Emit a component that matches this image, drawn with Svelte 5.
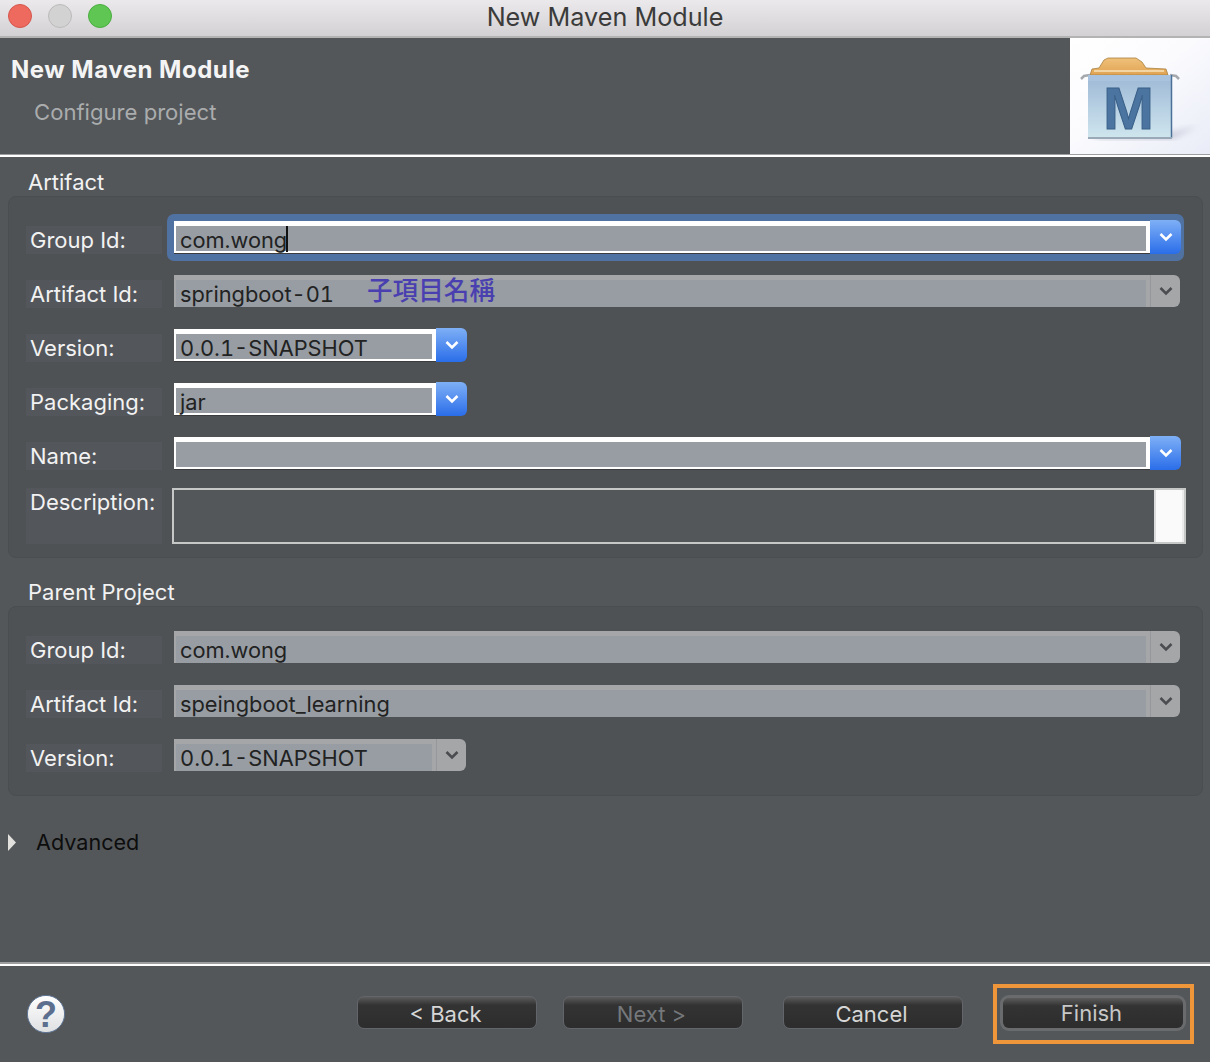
<script>
  const artifact = [
    { label: 'Group Id:', value: 'com.wong', focus: true },
    { label: 'Artifact Id:', value: 'springboot-01', disabled: true, note: '子項目名稱' },
    { label: 'Version:', value: '0.0.1-SNAPSHOT', short: true },
    { label: 'Packaging:', value: 'jar', short: true },
    { label: 'Name:', value: '' }
  ];
  const parent = [
    { label: 'Group Id:', value: 'com.wong', disabled: true },
    { label: 'Artifact Id:', value: 'speingboot_learning', disabled: true },
    { label: 'Version:', value: '0.0.1-SNAPSHOT', disabled: true, short: true }
  ];
</script>

{#snippet combo(row)}
  <div class="lab">{row.label}</div>
  <div class="slot" class:ring={row.focus}>
    <div class="combo" class:dis={row.disabled} class:short={row.short}>
      <div class="frame">
        <div class="inner">
          <span class="val">{row.value}</span>
          {#if row.focus}<span class="caret"></span>{/if}
          {#if row.note}<span class="note">{row.note}</span>{/if}
        </div>
      </div>
      <div class="arrow">
        <svg width="16" height="10" viewBox="0 0 16 10"><path d="M2.5 2 L8 7.5 L13.5 2" fill="none" stroke="currentColor" stroke-width="2.6"/></svg>
      </div>
    </div>
  </div>
{/snippet}

<div class="win">
  <header class="titlebar">
    <div class="lights">
      <span class="dot red"></span><span class="dot grey"></span><span class="dot green"></span>
    </div>
    <div class="wintitle">New Maven Module</div>
  </header>

  <section class="banner">
    <div class="bantext">
      <div class="h1">New Maven Module</div>
      <div class="h2">Configure project</div>
    </div>
    <div class="logo">
      <svg width="140" height="116" viewBox="0 0 140 116">
        <defs>
          <linearGradient id="bg" x1="0" y1="0" x2="1" y2="1"><stop offset="0" stop-color="#ffffff"/><stop offset="0.45" stop-color="#fbfbfe"/><stop offset="1" stop-color="#e9ecf7"/></linearGradient>
          <linearGradient id="box" x1="0" y1="0" x2="0" y2="1"><stop offset="0" stop-color="#9db8d6"/><stop offset="1" stop-color="#cfe6ee"/></linearGradient>
          <linearGradient id="lid" x1="0" y1="0" x2="0" y2="1"><stop offset="0" stop-color="#efc07a"/><stop offset="1" stop-color="#e0a452"/></linearGradient>
          <filter id="blur"><feGaussianBlur stdDeviation="3"/></filter>
        </defs>
        <rect width="140" height="116" fill="url(#bg)"/>
        <path d="M22 101 L102 101 L128 88 L104 94 L30 97 Z" fill="#a6a8bc" opacity="0.55" filter="url(#blur)"/>
        <path d="M20 37 L22 31 L29 30 L34 22 L38 20 L66 20 L72 24 L76 30 L96 31 L98 37 Z" fill="url(#lid)" stroke="#a8803f" stroke-width="0.8"/>
        <path d="M24 33 L94 33" stroke="#f8e3bd" stroke-width="1.5"/>
        <path d="M11 41 L14 38 L20 37 M109 41 L106 38 L100 37" stroke="#a5a9ad" stroke-width="2.5" fill="none"/>
        <rect x="18" y="37" width="84" height="63" fill="url(#box)"/>
        <rect x="18" y="37" width="84" height="6" fill="#a9c3df"/>
        <path d="M101.5 37 V100" stroke="#4b7098" stroke-width="1.5"/>
        <path d="M18 100 H102" stroke="#9aa9b8" stroke-width="2"/>
        <text x="33" y="91" textLength="51" lengthAdjust="spacingAndGlyphs" class="mark">M</text>
      </svg>
    </div>
  </section>
  <div class="rule top"></div>

  <main class="body">
    <div class="gtitle">Artifact</div>
    <div class="gbox first">
      {#each artifact as row}
        {@render combo(row)}
      {/each}
      <div class="lab tall">Description:</div>
      <div class="desc"><div class="scroll"></div></div>
    </div>

    <div class="gtitle second">Parent Project</div>
    <div class="gbox">
      {#each parent as row}
        {@render combo(row)}
      {/each}
    </div>

    <div class="adv">
      <svg width="8" height="17" viewBox="0 0 8 17"><path d="M0 0 L8 8.5 L0 17 Z" fill="#e2e1dd"/></svg>
      <span>Advanced</span>
    </div>
  </main>

  <div class="rule bottom"></div>
  <footer class="foot">
    <svg class="help" width="40" height="40" viewBox="0 0 40 40">
      <defs><linearGradient id="hg" x1="0" y1="0" x2="0" y2="1"><stop offset="0" stop-color="#ffffff"/><stop offset="1" stop-color="#dfe0e2"/></linearGradient></defs>
      <circle cx="20" cy="20" r="18.6" fill="url(#hg)" stroke="#5d7394" stroke-width="1"/>
      <text x="20" y="33" text-anchor="middle" class="q">?</text>
    </svg>
    <div class="btns">
      <button class="btn">&lt; Back</button>
      <button class="btn off">Next &gt;</button>
      <button class="btn gap">Cancel</button>
      <button class="btn gap primary">Finish<span class="mark-box"></span></button>
    </div>
  </footer>
</div>

<style>
  :global(body) { margin: 0; background: #53575a; }
  .win {
    width: 1210px; height: 1062px; display: flex; flex-direction: column; overflow: hidden;
    background: #53575a; font-family: "Inter", "Liberation Sans", sans-serif; font-size: 22px; color: #f2f2f2;
  }
  .titlebar {
    height: 36px; flex: none; position: relative; display: flex; align-items: center; justify-content: center;
    background: linear-gradient(#ebe9eb, #d3d1d3); border-bottom: 2px solid #b4b3b4;
  }
  .lights { position: absolute; left: 8px; top: 4px; display: flex; gap: 16px; }
  .dot { width: 24px; height: 24px; border-radius: 50%; box-sizing: border-box; border: 1px solid; }
  .red { background: #ee6a5f; border-color: #d5554b; }
  .grey { background: #d3d2d2; border-color: #bcbbbb; }
  .green { background: #5fc653; border-color: #4aad40; }
  .wintitle { color: #3b3b3b; font-size: 25.2px; line-height: 34px; margin-top: -2px; }

  .banner { height: 116px; flex: none; display: flex; justify-content: space-between; }
  .bantext { padding: 17px 0 0 11px; }
  .h1 { font-weight: 700; font-size: 24px; line-height: 30px; color: #f4f4f4; letter-spacing: 0.5px; }
  .h2 { margin: 12px 0 0 23px; color: #aaacad; font-size: 22.1px; line-height: 30px; }
  .logo { width: 140px; height: 116px; }
  .logo svg { display: block; }
  .mark { font-family: "Liberation Sans", sans-serif; font-weight: 700; font-size: 60px; fill: #4b74a1; stroke: #3a6088; stroke-width: 1; }

  .rule { flex: none; box-sizing: border-box; }
  .rule.top { height: 3px; background: #fff; border-top: 1px solid #9d9e9f; }
  .rule.bottom { height: 4px; background: #fff; border-top: 2px solid #9d9e9f; }

  .body { flex: 1; padding: 0 7px 0 8px; }
  .gtitle { margin-left: 20px; height: 39px; line-height: 50px; color: #f2f2f2; font-size: 22px; }
  .gtitle.second { margin-top: 14px; height: 34px; line-height: 40px; }
  .gbox {
    box-sizing: border-box; padding: 24px 21px 24px 17px; border: 1px solid #4b4e51; border-radius: 8px; background: #4f5255;
    display: grid; grid-template-columns: 136px 1fr; column-gap: 12px; row-gap: 22px; grid-auto-rows: 32px;
  }
  .gbox.first { grid-template-rows: repeat(5, 32px) 56px; padding-bottom: 10px; }

  .lab {
    align-self: end; height: 28px; margin-bottom: -1px; padding-left: 4px; line-height: 28px; white-space: nowrap;
    background: #53565a; color: #f2f2f2;
  }
  .lab.tall { height: 56px; margin: -3px 0 0; align-self: start; line-height: 28px; }

  .slot { min-width: 0; }
  .ring { margin: -7px -3px -8px -7px; padding: 7px 3px 8px 7px; background: #4f72a3; border-radius: 7px; height: 32px; }
  .combo { display: flex; height: 32px; width: 100%; }
  .combo.short { width: 293px; }
  .frame { flex: 1; min-width: 0; box-sizing: border-box; background: #fff; padding: 5px 4px 2px 2px; box-shadow: 0 1px 0 #3a3c3e; }
  .inner { height: 100%; background: #979da3; position: relative; display: flex; align-items: center; padding-left: 4px; color: #222; }
  .val { font-size: 21.8px; line-height: 26px; white-space: nowrap; font-variant-numeric: tabular-nums; position: relative; top: 1px; }
  .dis .val { top: 0; }
  .caret { width: 2px; height: 26px; background: #111; margin-left: -1px; }
  .note {
    position: absolute; left: 191px; top: -9px; font-family: "Noto Sans CJK TC", sans-serif; font-weight: 500; font-size: 25.6px; line-height: 36px; color: #4a3fb0;
  }
  .arrow {
    flex: none; width: 31px; margin: -1px 0; border-radius: 0 6px 6px 0; display: flex; align-items: center; justify-content: center;
    background: linear-gradient(#7fb0f6, #2a6de9); color: #fff;
  }
  .dis .frame { background: #a5a6a8; padding: 5px 4px 0 2px; box-shadow: none; }
  .dis .arrow { width: 30px; margin: 0 1px 0 0; background: #a5a6a8; color: #4a4c4f; border-left: 1px solid #96979a; box-sizing: border-box; }

  .desc { margin: -3px -5px 0 -2px; height: 56px; box-sizing: border-box; border: 2px solid #c6c7c7; background: #53575a; display: flex; justify-content: flex-end; }
  .scroll { width: 30px; background: #fafafa; border-left: 2px solid #dcdcdc; border-right: 2px solid #ececec; box-sizing: border-box; }

  .adv { display: flex; align-items: center; height: 28px; margin-top: 32px; color: #0d0d0d; }
  .adv svg { flex: none; }
  .adv span { margin-left: 20px; font-size: 21.6px; }

  .foot { height: 96px; flex: none; box-sizing: border-box; padding: 0 27px 1px 26px; display: flex; align-items: center; justify-content: space-between; }
  .help { display: block; margin-top: 1px; }
  .q { font-family: "Liberation Sans", sans-serif; font-weight: 700; font-size: 36px; fill: #5c6f8e; }
  .btns { display: flex; align-items: center; gap: 26px; margin-bottom: 2px; }
  .btn {
    width: 180px; height: 33px; box-sizing: border-box; padding: 2px 3px 0 0; border: 1px solid #62656a; border-radius: 7px;
    background: linear-gradient(#5c5c5c 0, #333 8px, #2d2d2d 100%); color: #d6d6d6; font: 22px "Inter", "Liberation Sans", sans-serif; line-height: 31px;
  }
  .btn.off { color: #75787b; }
  .btn.gap { margin-left: 14px; }
  .primary { position: relative; height: 30px; width: 180px; margin-top: 1px; padding-top: 0; border: 0; box-shadow: 0 0 0 3px #6a6b6d; border-radius: 6px; line-height: 30px; color: #c8c8c8; }
  .mark-box { position: absolute; left: -10px; right: -11px; top: -14px; bottom: -16px; border: 4px solid #f0963a; }
</style>
